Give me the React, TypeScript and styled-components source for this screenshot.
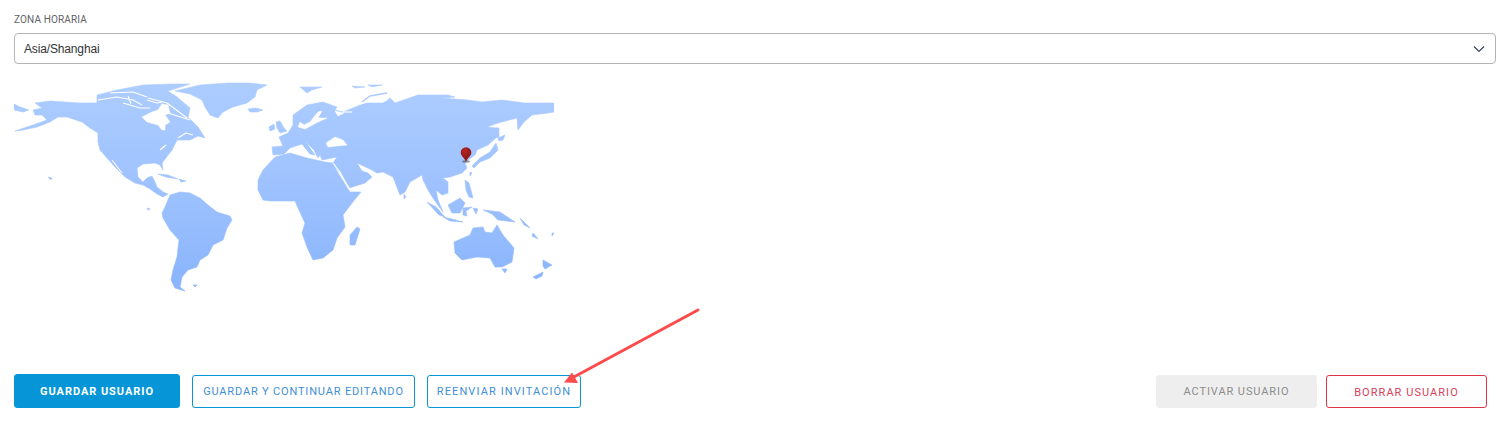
import React from "react";
import styled, { createGlobalStyle } from "styled-components";

const Global = createGlobalStyle`
  html, body { margin: 0; padding: 0; background: #fff; }
  body { font-family: "Roboto", "Liberation Sans", sans-serif; }
`;

const Page = styled.div`
  position: relative;
  width: 1508px;
  height: 432px;
  box-sizing: border-box;
  padding: 14px 12px 0 14px;
  overflow: hidden;
`;

const Label = styled.label`
  display: block;
  height: 19px;
  font: 400 10px/11px "Roboto", sans-serif;
  letter-spacing: 0.14px;
  color: #5f6368;
`;

const Select = styled.div`
  display: flex;
  align-items: center;
  justify-content: space-between;
  box-sizing: border-box;
  height: 31px;
  padding: 1px 10px 0 9px;
  border: 1px solid #b4b4b8;
  border-radius: 4px;
  font: 400 12px "Liberation Sans", Arial, sans-serif;
  letter-spacing: -0.15px;
  color: #333;
`;

const MapSvg = styled.svg`
  display: block;
  width: 540px;
  height: 216px;
  margin-top: 16px;
`;

const Actions = styled.div`
  display: flex;
  align-items: center;
  justify-content: space-between;
  margin-top: 78px;
  padding-right: 9px;
`;

const Group = styled.div<{ $gap: number }>`
  display: flex;
  align-items: center;
  gap: ${(p) => p.$gap}px;
`;

const Button = styled.button<{
  $kind: "primary" | "outline" | "disabled" | "danger";
  $w: number;
  $ls: number;
}>`
  box-sizing: border-box;
  width: ${(p) => p.$w}px;
  height: ${(p) => (p.$kind === "primary" ? 34 : 33)}px;
  padding: ${(p) => (p.$kind === "danger" ? "2px 0 0" : "0")};
  border-radius: 3px;
  font-family: "Roboto", sans-serif;
  font-size: 11px;
  letter-spacing: ${(p) => p.$ls}px;
  font-weight: ${(p) => (p.$kind === "primary" ? 700 : 400)};
  border: 1px solid
    ${(p) =>
      p.$kind === "danger" ? "#dc3545" : p.$kind === "disabled" ? "#eeeeee" : "#0696d7"};
  background: ${(p) =>
    p.$kind === "primary" ? "#0696d7" : p.$kind === "disabled" ? "#eeeeee" : "#fff"};
  color: ${(p) =>
    p.$kind === "primary"
      ? "#fff"
      : p.$kind === "danger"
      ? "#d8405a"
      : p.$kind === "disabled"
      ? "#8c8c8c"
      : "#3f8fd6"};
`;

const Arrow = styled.svg`
  position: absolute;
  left: 0;
  top: 0;
  width: 1508px;
  height: 432px;
  pointer-events: none;
`;

const land = [
  // North America with the arctic islands
  "M35,103 L50,101 L80,103 L97,103 L97,95 L117,90 L143,85 L170,84 L190,84 L168,91 L177,97 L190,108 L188,118 L191,120 L198,127 L205,138 L198,136 L190,140 L177,140 L172,150 L162,163 L163,170 L160,165 L155,163 L143,164 L137,168 L138,177 L143,182 L147,178 L152,176 L155,182 L157,187 L163,192 L168,194 L163,197 L157,194 L150,189 L143,185 L135,183 L125,177 L115,167 L107,158 L100,150 L98,142 L98,133 L90,128 L82,122 L67,117 L58,117 L50,122 L37,127 L23,130 L15,131 L33,125 L47,120 L42,115 L35,115 L33,110 L42,108 Z",
  "M14,104 L20,107 L29,110 L23,112 L14,110 Z",
  // Greenland
  "M175,91 L200,85 L227,83 L250,83 L267,85 L257,90 L255,97 L247,103 L233,107 L223,112 L218,118 L210,115 L205,107 L202,100 L190,94 Z",
  // Iceland, UK, Ireland, Svalbard
  "M248,109 L256,108 L263,110 L257,112 L250,112 Z",
  "M276,122 L280,121 L284,128 L287,131 L280,133 L277,128 Z",
  "M269,127 L274,124 L275,129 L270,131 Z",
  "M300,87 L322,87 L312,90 L307,93 Z",
  "M352,86 L365,87 L355,88 Z M368,85 L382,85 L372,87 Z",
  // Caribbean
  "M158,174 L168,175 L178,179 L166,177 Z",
  "M179,179 L186,181 L181,182 Z",
  // South America
  "M170,195 L180,192 L190,193 L200,198 L208,205 L217,212 L230,216 L232,220 L227,228 L223,240 L213,245 L208,255 L200,260 L197,267 L188,270 L182,277 L180,287 L185,291 L175,288 L171,280 L173,270 L177,257 L179,240 L170,230 L163,218 L162,213 L165,207 Z",
  "M193,285 L197,285 L195,287 Z",
  "M48,177 L52,178 L51,180 Z",
  "M147,208 L150,209 L148,210 Z",
  // Eurasia
  "M272,147 L283,146 L279,137 L288,133 L293,125 L293,115 L307,105 L323,102 L337,107 L335,110 L343,112 L353,108 L365,103 L383,103 L390,98 L395,103 L418,95 L448,95 L455,97 L442,98 L468,100 L482,102 L502,100 L525,103 L554,103 L554,112 L548,113 L532,115 L524,122 L518,130 L517,118 L498,123 L487,127 L497,128 L497,137 L488,145 L477,150 L475,155 L468,160 L465,163 L467,168 L462,173 L450,177 L443,178 L448,182 L448,193 L442,195 L436,190 L438,200 L443,212 L440,208 L433,198 L428,190 L423,180 L422,175 L410,182 L405,192 L400,195 L393,177 L383,172 L377,173 L372,170 L357,163 L362,171 L368,173 L372,177 L365,183 L350,188 L340,173 L333,163 L337,157 L322,160 L320,155 L318,158 L314,150 L305,141 L315,155 L310,154 L302,144 L296,146 L290,148 L284,154 L273,155 Z",
  // Africa
  "M258,180 L263,170 L275,157 L290,153 L307,158 L325,162 L333,163 L338,173 L350,192 L361,192 L352,203 L343,215 L345,227 L337,238 L333,250 L323,258 L313,260 L307,247 L302,233 L305,223 L298,208 L295,201 L283,201 L270,201 L263,200 L258,190 Z",
  // Madagascar
  "M357,227 L360,229 L355,245 L350,245 L350,235 Z",
  // Japan, Sakhalin, Hokkaido, Taiwan
  "M472,166 L480,158 L490,152 L496,143 L498,150 L490,158 L480,162 L474,168 Z",
  "M498,138 L505,135 L503,140 L499,141 Z",
  "M496,128 L499,128 L499,137 L497,138 Z",
  "M470,172 L472,173 L470,176 Z",
  "M404,194 L406,197 L404,199 Z",
  // Philippines
  "M465,180 L469,183 L473,198 L469,197 L466,190 Z",
  // Borneo
  "M448,205 L460,198 L465,203 L460,213 L452,213 Z",
  // Sumatra, Java
  "M427,202 L436,207 L445,217 L439,215 Z",
  "M443,217 L452,219 L463,222 L450,221 Z",
  // Sulawesi & Moluccas
  "M463,208 L472,207 L466,211 L467,216 L463,215 Z",
  "M473,208 L478,209 L476,214 Z",
  // New Guinea
  "M483,210 L492,211 L500,212 L515,222 L498,220 L492,214 Z",
  "M520,218 L530,228 L524,225 Z",
  // Pacific specks
  "M533,233 L538,239 L532,236 Z",
  "M552,233 L554,233 L552,236 Z",
  // Australia
  "M454,242 L470,235 L473,228 L483,227 L485,232 L492,233 L497,225 L503,235 L514,248 L512,262 L502,267 L495,267 L490,258 L477,257 L462,260 L455,253 Z",
  "M502,269 L507,269 L505,273 Z",
  // New Zealand
  "M543,260 L552,265 L545,269 L543,266 Z",
  "M533,277 L543,272 L542,276 L536,279 Z",
];

const lines = [
  "M343,112 L352,112",
];

const seas = [
  // Hudson Bay
  "M142,117 L152,112 L158,110 L162,104 L168,105 L170,113 L165,115 L170,122 L165,125 L165,130 L162,130 L158,125 L147,122 Z",
  // Black Sea
  "M326,143 L335,137 L343,140 L347,145 L337,146 L328,147 Z",
  // Baltic
  "M300,122 L304,125 L310,122 L318,112 L322,111 L318,118 L327,118 L316,123 L305,129 L298,127 Z",
  // White Sea
  "M335,111 L344,113 L338,116 Z",
];

const channels = [
  "M98,100 L117,97 L133,100 L142,105",
  "M110,93 L133,92 L147,97",
  "M147,100 L157,103 L162,102",
  "M123,103 L140,108 L150,108",
  "M148,98 L167,103 L187,118",
  "M168,113 L190,120",
  "M128,96 L131,104",
  "M112,160 L122,173",
  "M178,138 L186,133 L193,135",
  "M160,150 L166,145",
  "M333,163 L340,172 L349,189 L363,185",
  "M452,195 L456,187",
  "M388,100 L372,101 L360,104",
];

const smallLand = ["M362,102 L370,96 L387,93"];

const App: React.FC = () => (
  <Page>
    <Global />
    <Label>ZONA HORARIA</Label>
    <Select>
      <span>Asia/Shanghai</span>
      <svg width="12" height="8" viewBox="0 0 12 8" aria-hidden="true">
        <path d="M1 1.5 L6 6.5 L11 1.5" fill="none" stroke="#3c4452" strokeWidth="1.2" />
      </svg>
    </Select>
    <MapSvg viewBox="14 80 540 216" aria-hidden="true">
      <defs>
        <linearGradient id="landFill" gradientUnits="userSpaceOnUse" x1="0" y1="80" x2="0" y2="295">
          <stop offset="0" stopColor="#adcdff" />
          <stop offset="0.45" stopColor="#a0c3ff" />
          <stop offset="1" stopColor="#88b4fb" />
        </linearGradient>
        <radialGradient id="pinFill" cx="0.4" cy="0.25" r="0.8">
          <stop offset="0" stopColor="#b82424" />
          <stop offset="1" stopColor="#7c1212" />
        </radialGradient>
        <filter id="soft" x="-2%" y="-2%" width="104%" height="104%">
          <feGaussianBlur stdDeviation="0.4" />
        </filter>
        <clipPath id="mapClip">
          <rect x="14" y="80" width="540" height="216" />
        </clipPath>
      </defs>
      <g clipPath="url(#mapClip)">
        <g filter="url(#soft)">
          <g fill="url(#landFill)" stroke="url(#landFill)" strokeWidth="0.6" strokeLinejoin="round">
            {land.map((d, i) => (
              <path key={i} d={d} />
            ))}
          </g>
          <g fill="none" stroke="url(#landFill)" strokeWidth="1.4">
            {smallLand.map((d, i) => (
              <path key={i} d={d} />
            ))}
          </g>
          <g fill="#fff" stroke="#fff" strokeWidth="0.5" strokeLinejoin="round">
            {seas.map((d, i) => (
              <path key={i} d={d} />
            ))}
          </g>
          <g fill="none" stroke="#fff" strokeWidth="1.1" strokeLinejoin="round">
            {channels.concat(lines).map((d, i) => (
              <path key={i} d={d} />
            ))}
          </g>
        </g>
        <ellipse cx="466" cy="161.5" rx="4" ry="1.2" fill="#555" opacity="0.6" />
        <path
          d="M466 162 C465.3 158.5 460.7 156.5 460.7 152.6 A5.3 5.3 0 0 1 471.3 152.6 C471.3 156.5 466.7 158.5 466 162 Z"
          fill="url(#pinFill)"
        />
      </g>
    </MapSvg>
    <Actions>
      <Group $gap={12}>
        <Button $kind="primary" $w={166} $ls={0.95}>GUARDAR USUARIO</Button>
        <Button $kind="outline" $w={223} $ls={0.83}>GUARDAR Y CONTINUAR EDITANDO</Button>
        <Button $kind="outline" $w={154} $ls={1.1}>REENVIAR INVITACIÓN</Button>
      </Group>
      <Group $gap={9}>
        <Button $kind="disabled" $w={161} $ls={0.92}>ACTIVAR USUARIO</Button>
        <Button $kind="danger" $w={161} $ls={1.05}>BORRAR USUARIO</Button>
      </Group>
    </Actions>
    <Arrow viewBox="0 0 1508 432" aria-hidden="true">
      <path d="M698 310 L572 378" stroke="#ff4b4b" strokeWidth="3" strokeLinecap="round" fill="none" />
      <path d="M564 382.5 L572 372.5 L578 383 Z" fill="#ff4b4b" />
    </Arrow>
  </Page>
);

export default App;
